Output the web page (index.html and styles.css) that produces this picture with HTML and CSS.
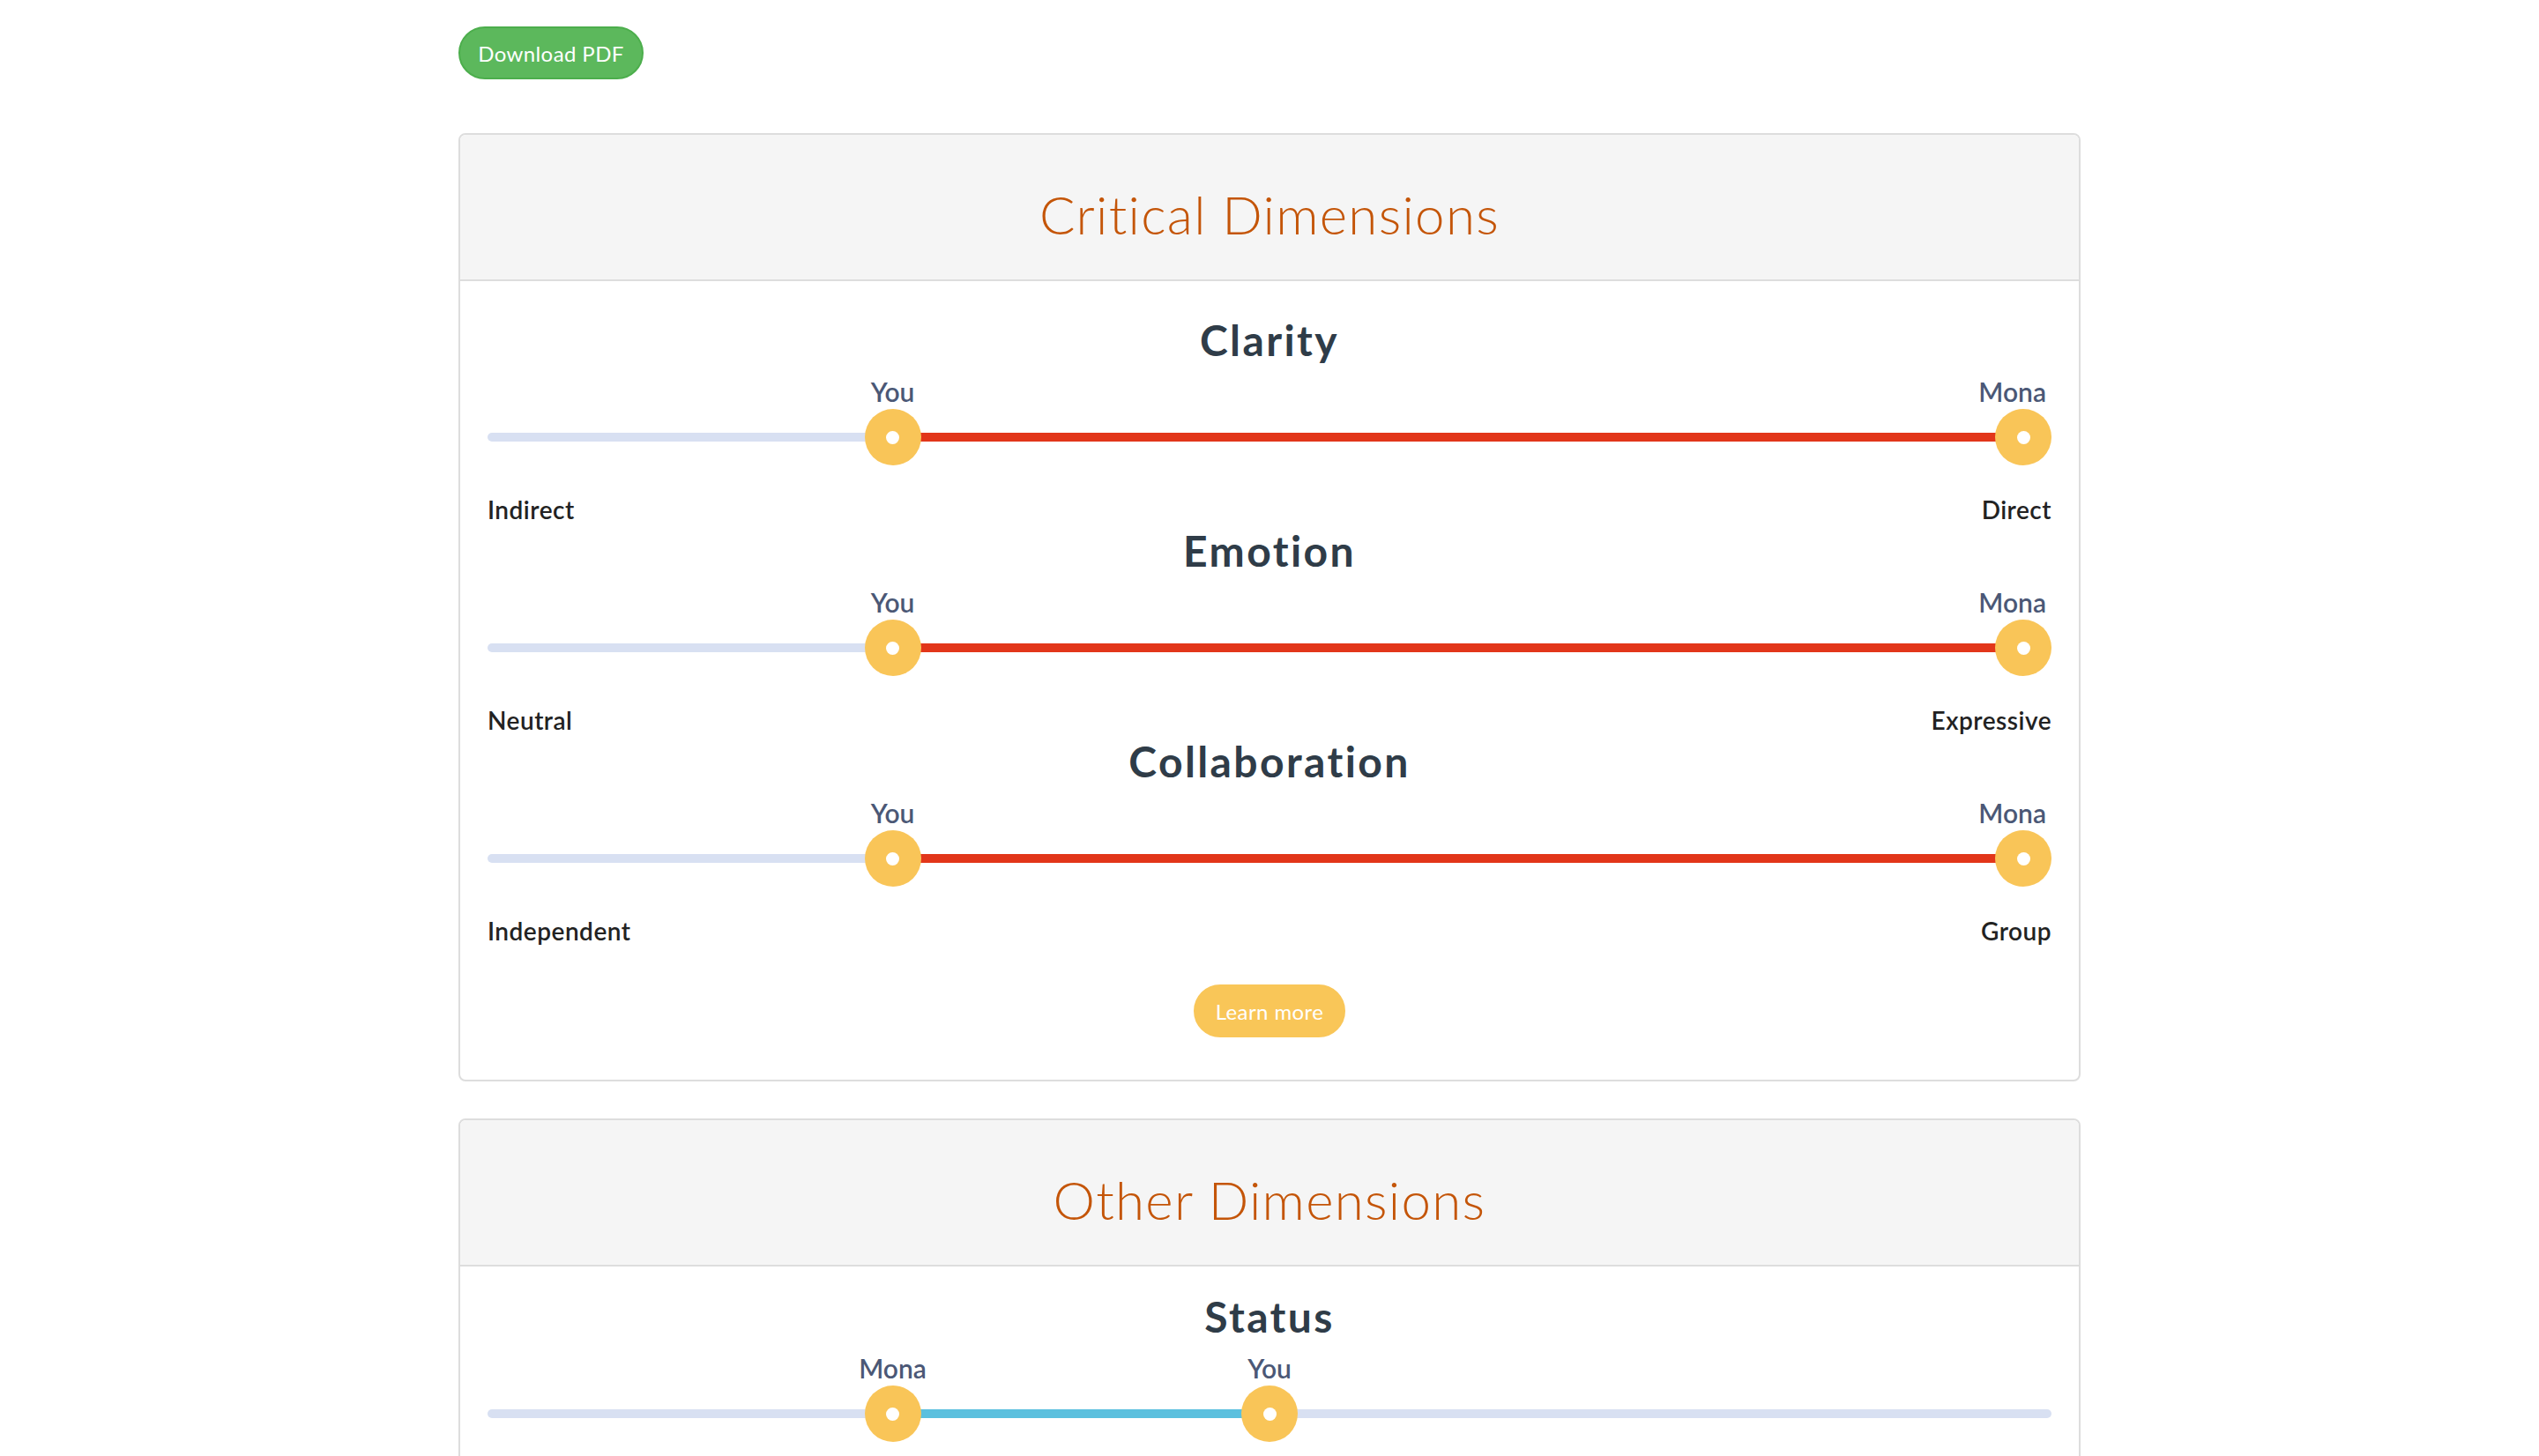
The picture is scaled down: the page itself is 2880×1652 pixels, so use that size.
FILE: index.html
```html
<!DOCTYPE html>
<html lang="en">
<head>
<meta charset="utf-8">
<title>Dimensions</title>
<link rel="stylesheet" href="styles.css">
</head>
<body>
<div class="page">
  <button class="btn btn-pdf" type="button">Download PDF</button>

  <section class="panel">
    <div class="panel-heading"><h2 class="panel-title">Critical Dimensions</h2></div>
    <div class="panel-body">
      <div class="dim">
        <h3 class="dim-title">Clarity</h3>
        <div class="slider">
          <div class="track"><div class="fill fill-red" style="--a:0.25;--b:1"></div></div>
          <div class="handle" style="--p:0.25"><span class="tag">You</span></div>
          <div class="handle" style="--p:1"><span class="tag tag-end">Mona</span></div>
        </div>
        <div class="ends"><span>Indirect</span><span>Direct</span></div>
      </div>
      <div class="dim">
        <h3 class="dim-title">Emotion</h3>
        <div class="slider">
          <div class="track"><div class="fill fill-red" style="--a:0.25;--b:1"></div></div>
          <div class="handle" style="--p:0.25"><span class="tag">You</span></div>
          <div class="handle" style="--p:1"><span class="tag tag-end">Mona</span></div>
        </div>
        <div class="ends"><span>Neutral</span><span>Expressive</span></div>
      </div>
      <div class="dim">
        <h3 class="dim-title">Collaboration</h3>
        <div class="slider">
          <div class="track"><div class="fill fill-red" style="--a:0.25;--b:1"></div></div>
          <div class="handle" style="--p:0.25"><span class="tag">You</span></div>
          <div class="handle" style="--p:1"><span class="tag tag-end">Mona</span></div>
        </div>
        <div class="ends"><span>Independent</span><span>Group</span></div>
      </div>
      <div class="actions"><button class="btn btn-learn" type="button">Learn more</button></div>
    </div>
  </section>

  <section class="panel">
    <div class="panel-heading"><h2 class="panel-title">Other Dimensions</h2></div>
    <div class="panel-body panel-body-tight">
      <div class="dim">
        <h3 class="dim-title">Status</h3>
        <div class="slider">
          <div class="track"><div class="fill fill-blue" style="--a:0.25;--b:0.5"></div></div>
          <div class="handle" style="--p:0.25"><span class="tag">Mona</span></div>
          <div class="handle" style="--p:0.5"><span class="tag">You</span></div>
        </div>
      </div>
    </div>
  </section>
</div>
</body>
</html>
```

FILE: styles.css
```css
html, body {
  margin: 0;
  padding: 0;
  background: #ffffff;
}

body {
  font-family: "Lato", "Open Sans", sans-serif;
  color: #333333;
}

.page {
  width: 1840px;
  margin: 0 auto;
  padding-top: 30px;
}

.btn {
  display: inline-flex;
  align-items: center;
  justify-content: center;
  height: 60px;
  border-radius: 30px;
  font-family: "Lato", sans-serif;
  font-size: 24px;
  letter-spacing: 0.4px;
  color: #ffffff;
  cursor: pointer;
  padding: 0;
}

.btn-pdf {
  width: 210px;
  background: #5cb85c;
  border: 2px solid #4cae4c;
}

.panel {
  margin-top: 61px;
  border: 2px solid #dddddd;
  border-radius: 8px;
  overflow: hidden;
}

.panel + .panel {
  margin-top: 42px;
}

.panel-heading {
  background: #f5f5f5;
  border-bottom: 2px solid #dddddd;
  padding: 57px 0 41px;
}

.panel-title {
  margin: 0;
  text-align: center;
  font-size: 60px;
  line-height: 66px;
  font-weight: 300;
  letter-spacing: 1.3px;
  color: #c45508;
}

.panel-body {
  padding: 41px 31px 48px;
}

.panel-body-tight {
  padding-top: 31px;
}

.dim + .dim {
  margin-top: 5px;
}

.dim-title {
  margin: 0;
  text-align: center;
  font-size: 48px;
  line-height: 52px;
  font-weight: 700;
  letter-spacing: 2.4px;
  color: #2f3c48;
}

.slider {
  position: relative;
  height: 116px;
  padding-top: 79px;
  box-sizing: border-box;
}

.track {
  position: relative;
  height: 10px;
  border-radius: 5px;
  background: #d8e0f2;
}

.fill {
  position: absolute;
  top: 0;
  bottom: 0;
  left: calc(32px + (100% - 64px) * var(--a));
  width: calc((100% - 64px) * (var(--b) - var(--a)));
}

.fill-red {
  background: #e2361a;
}

.fill-blue {
  background: #5bc0de;
}

.handle {
  position: absolute;
  top: 52px;
  left: calc(32px + (100% - 64px) * var(--p));
  width: 64px;
  height: 64px;
  margin-left: -32px;
  border-radius: 50%;
  background: #f9c558;
}

.handle::after {
  content: "";
  position: absolute;
  left: 50%;
  top: 50%;
  width: 15px;
  height: 15px;
  margin: -7.5px 0 0 -7.5px;
  border-radius: 50%;
  background: #ffffff;
}

.tag {
  position: absolute;
  bottom: calc(100% + 3px);
  left: 50%;
  transform: translateX(-50%);
  font-size: 30px;
  line-height: 34px;
  font-weight: 600;
  color: #4b5876;
  white-space: nowrap;
}

.tag-end {
  left: auto;
  right: 6px;
  transform: none;
}

.ends {
  display: flex;
  justify-content: space-between;
  margin-top: 34px;
  font-size: 28px;
  line-height: 32px;
  font-weight: 600;
  letter-spacing: 0.5px;
  color: #222222;
}

.actions {
  display: flex;
  justify-content: center;
  margin-top: 45px;
}

.btn-learn {
  width: 172px;
  background: #f9c658;
  border: 2px solid #f9c658;
}
```
